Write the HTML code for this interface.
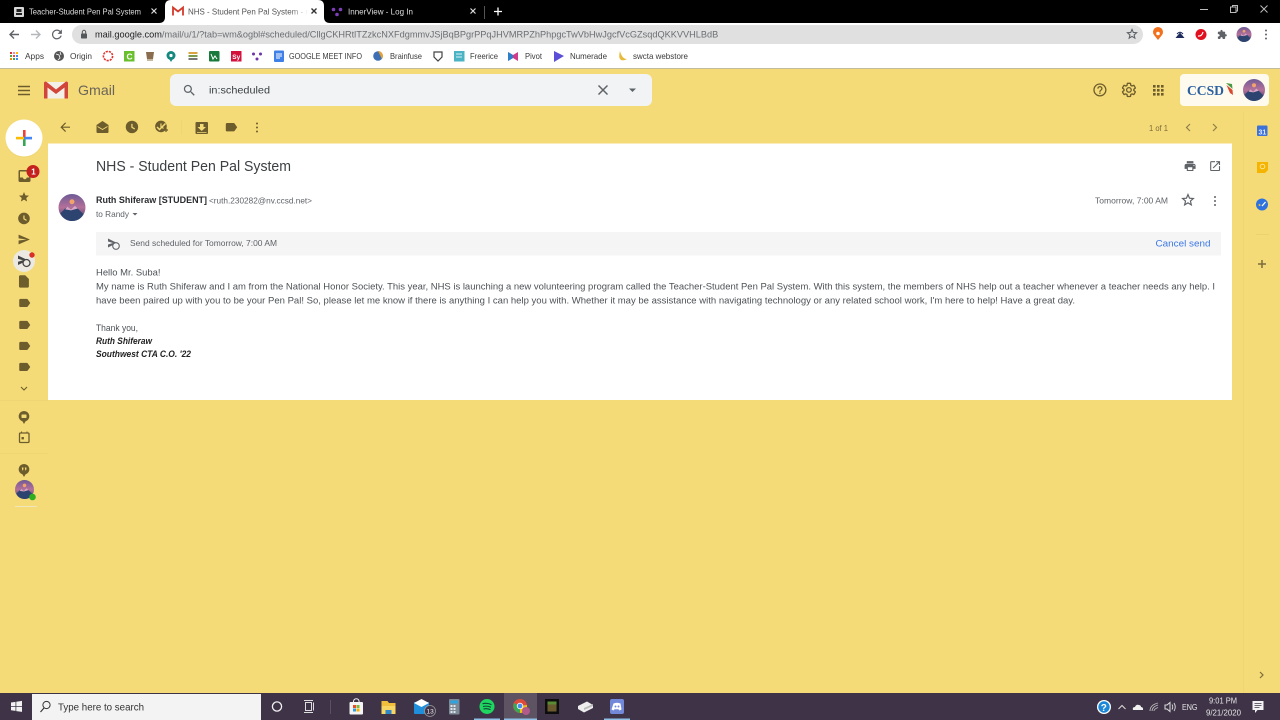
<!DOCTYPE html>
<html lang="en"><head><meta charset="utf-8"><title>NHS - Student Pen Pal System</title>
<style>
html,body{margin:0;padding:0;width:1280px;height:720px;overflow:hidden;background:#f5db77}
svg{display:block;position:absolute;left:0;top:0;filter:blur(.35px)}
text{font-family:"Liberation Sans",Arial,sans-serif;white-space:pre}
.i{fill:#6d5d2c}
.g{fill:#5f6368}
.s{fill:#5f6368;font-size:9.6px}
.b{fill:#4d5256;font-size:9.6px}
.bm{fill:#3a3a3a;font-size:8.2px}
</style></head><body>
<svg width="1280" height="720" viewBox="0 0 1280 720" xmlns="http://www.w3.org/2000/svg">
<defs>
<linearGradient id="sky" x1="0" y1="0" x2="0" y2="1"><stop offset="0" stop-color="#6d5a95"/><stop offset=".5" stop-color="#b5709a"/><stop offset="1" stop-color="#2c3f66"/></linearGradient>
<linearGradient id="fade" x1="0" x2="1"><stop offset="0" stop-color="#fff" stop-opacity="0"/><stop offset="1" stop-color="#fff"/></linearGradient>
<symbol id="av" viewBox="0 0 28 28">
<circle cx="14" cy="14" r="14" fill="url(#sky)"/><circle cx="14" cy="8" r="2.6" fill="#f2a36b"/>
<path d="M2 20l7-7 4 3 4-4 9 9q-4 7-12 7T2 20z" fill="#2d4470"/><path d="M9 13l4 3 4-4 3 3-7 2-6-1z" fill="#dba6c4"/>
</symbol>
<path id="lb" d="M17.63 5.84C17.27 5.33 16.67 5 16 5L5 5.01C3.9 5.01 3 5.9 3 7v10c0 1.1.9 1.99 2 1.99L16 19c.67 0 1.27-.33 1.63-.84L22 12l-4.37-6.16z"/>
<path id="clk" fill-rule="evenodd" d="M12 2a10 10 0 1 0 0 20 10 10 0 0 0 0-20zm-1 5h2v5l4 2.4-1 1.7-5-3z"/>
</defs>

<!-- page -->
<rect width="1280" height="720" fill="#f5db77"/>

<!-- title bar -->
<rect width="1280" height="23" fill="#000"/>
<path d="M159 23q6 0 6-6V6q0-6 6-6h147q6 0 6 6v11q0 6 6 6z" fill="#fff"/>
<rect x="14" y="7" width="10" height="10" rx="1" fill="#d8d8d8"/><rect x="16.5" y="9" width="5" height="3" fill="#222"/><rect x="16" y="13" width="6" height="2" fill="#222"/>
<text x="29" y="14.5" font-size="8.6" fill="#dedede" textLength="112" lengthAdjust="spacingAndGlyphs">Teacher-Student Pen Pal System</text>
<path d="M151.500 8.500l5 5m0-5l-5 5" stroke="#ddd" stroke-width="1.200"/>
<path d="M173 15.500v-8l5 4 5-4v8" fill="none" stroke="#d33b2c" stroke-width="1.800"/>
<text x="188" y="14.500" font-size="8.600" fill="#555" textLength="120" lengthAdjust="spacingAndGlyphs">NHS - Student Pen Pal System - r</text>
<rect x="290" y="4" width="18" height="16" fill="url(#fade)"/>
<path d="M311.500 8.500l5 5m0-5l-5 5" stroke="#333" stroke-width="1.400"/>
<g fill="#7d3fb8"><circle cx="333.500" cy="9.500" r="1.800"/><circle cx="340.500" cy="9.500" r="1.800"/><circle cx="337" cy="14.500" r="1.800"/></g>
<text x="348" y="14.500" font-size="8.600" fill="#dedede" textLength="65" lengthAdjust="spacingAndGlyphs">InnerView - Log In</text>
<path d="M470.500 8.500l5 5m0-5l-5 5" stroke="#ddd" stroke-width="1.200"/>
<rect x="484" y="6" width="1" height="13" fill="#555"/>
<path d="M498 7.500v8m-4-4h8" stroke="#fff" stroke-width="1.300"/>
<path d="M1200 9.500h8" stroke="#bbb"/><path d="M1230.500 7h5.500v5.500h-5.500zM1232.500 7v-1.500h5v5.500h-1.500" fill="none" stroke="#bbb"/><path d="M1260.500 5.500l7 7m0-7l-7 7" stroke="#bbb"/>

<!-- toolbar -->
<rect y="23" width="1280" height="45" fill="#fff"/>
<rect y="68" width="1280" height="1" fill="#c4bd9a"/>
<g fill="none" stroke="#5f6368" stroke-width="1.400"><path d="M19 34.500h-9m4-4l-4 4 4 4"/></g>
<g fill="none" stroke="#b5b8bb" stroke-width="1.400"><path d="M31 34.500h9m-4-4l4 4-4 4"/></g>
<path transform="translate(49.500 27) scale(.62)" fill="#5f6368" d="M17.65 6.35C16.2 4.9 14.21 4 12 4c-4.42 0-7.99 3.58-7.99 8s3.57 8 7.99 8c3.730 0 6.840-2.550 7.730-6h-2.080c-.82 2.330-3.040 4-5.650 4-3.310 0-6-2.690-6-6s2.690-6 6-6c1.660 0 3.140.69 4.220 1.780L13 11h7V4l-2.350 2.350z"/>
<rect x="72" y="25" width="1071" height="19" rx="9.500" fill="#e0e0e0"/>
<rect x="81" y="33.500" width="6" height="5" rx=".8" fill="#55585b"/><path d="M82.300 33.500v-1.500a1.700 1.700 0 0 1 3.400 0v1.500" fill="none" stroke="#55585b"/>
<text y="37.500" font-size="9.200" fill="#6b6e72"><tspan x="95" fill="#202124">mail.google.com</tspan><tspan>/mail/u/1/?tab=wm&amp;ogbl#scheduled/CllgCKHRtlTZzkcNXFdgmmvJSjBqBPgrPPqJHVMRPZhPhpgcTwVbHwJgcfVcGZsqdQKKVVHLBdB</tspan></text>
<path transform="translate(1126.500 28.500) scale(.46)" fill="none" stroke="#5f6368" stroke-width="2.400" d="M12 17.270L18.180 21l-1.640-7.030L22 9.240l-7.190-.61L12 2 9.190 8.630 2 9.240l5.460 4.730L5.820 21z"/>
<path d="M1158 40l-4-5a5 5 0 1 1 8 0z" fill="#f2711c"/><circle cx="1158" cy="33.500" r="1.800" fill="#fff"/>
<path d="M1175.500 38l4.500-5.500 4.500 5.500z" fill="#1d2a5c"/><path d="M1177 34q3-3.500 6 0" fill="none" stroke="#1d2a5c"/>
<circle cx="1201" cy="34.500" r="5.500" fill="#e0101e"/><path d="M1198 36q4 .5 5-4" fill="none" stroke="#fff" stroke-width="1.200"/>
<path transform="translate(1217 29.500) scale(.43)" fill="#5f6368" d="M20.500 11H19V7c0-1.100-.9-2-2-2h-4V3.500C13 2.120 11.880 1 10.500 1S8 2.120 8 3.500V5H4c-1.100 0-1.990.9-1.990 2v3.800H3.500c1.490 0 2.700 1.210 2.700 2.700s-1.210 2.700-2.700 2.700H2V20c0 1.100.9 2 2 2h3.800v-1.500c0-1.490 1.210-2.700 2.700-2.700 1.490 0 2.700 1.210 2.700 2.700V22H17c1.100 0 2-.9 2-2v-4h1.500c1.380 0 2.500-1.120 2.500-2.500S21.880 11 20.500 11z"/>
<use href="#av" x="1236.500" y="27" width="15" height="15"/>
<g fill="#5f6368"><circle cx="1266" cy="30.500" r="1"/><circle cx="1266" cy="34.500" r="1"/><circle cx="1266" cy="38.500" r="1"/></g>

<!-- bookmarks -->
<g fill="#d33"><rect x="10" y="52" width="2" height="2"/><rect x="13" y="52" width="2" height="2" fill="#e8a"/><rect x="16" y="52" width="2" height="2" fill="#fb0"/><rect x="10" y="55" width="2" height="2" fill="#4a4"/><rect x="13" y="55" width="2" height="2" fill="#e44"/><rect x="16" y="55" width="2" height="2" fill="#48e"/><rect x="10" y="58" width="2" height="2" fill="#e80"/><rect x="13" y="58" width="2" height="2" fill="#3a5"/><rect x="16" y="58" width="2" height="2" fill="#48e"/></g>
<text x="25" y="59" class="bm" textLength="19" lengthAdjust="spacingAndGlyphs">Apps</text>
<circle cx="59" cy="56" r="5" fill="#555"/><path d="M56 54l3 1 1 3-2 2M60 52l1 3" stroke="#fff" fill="none" stroke-width=".8"/>
<text x="70" y="59" class="bm" textLength="22" lengthAdjust="spacingAndGlyphs">Origin</text>
<circle cx="108" cy="56" r="4.600" fill="none" stroke="#e2332c" stroke-width="1.600" stroke-dasharray="2.200 1"/>
<rect x="124" y="51" width="10.500" height="10.500" fill="#6abf2e"/><text x="126.500" y="59.500" font-size="8.500" font-weight="bold" fill="#fff">C</text>
<path d="M146 52h8l-1 7h-6z" fill="#8a6d4f"/><rect x="147" y="59" width="6" height="2" fill="#c9b8a0"/>
<circle cx="171" cy="55.500" r="4.500" fill="#16897f"/><circle cx="171" cy="55.500" r="1.600" fill="#fff"/><path d="M169.500 59.500h3L171 62z" fill="#16897f"/>
<rect x="188.500" y="52" width="9" height="2" fill="#d9a441"/><rect x="188.500" y="55" width="9" height="2" fill="#7b9c4d"/><rect x="188.500" y="58" width="9" height="2" fill="#777"/>
<rect x="209" y="51" width="10.500" height="10.500" rx="1" fill="#1a7a3c"/><path d="M211 54l2 5 2-3 2 3" fill="none" stroke="#fff"/>
<rect x="231" y="51" width="10.500" height="10.500" fill="#d3123c"/><text x="232.300" y="59" font-size="6.500" font-weight="bold" fill="#fff">Sy</text>
<g fill="#6c34a8"><circle cx="253.500" cy="54" r="1.500"/><circle cx="260.500" cy="54" r="1.500"/><circle cx="257" cy="59" r="1.500"/></g>
<rect x="274" y="50.500" width="10" height="11.500" rx="1" fill="#3f7fe8"/><path d="M276 54h6m-6 2h6m-6 2h4" stroke="#fff"/>
<text x="289" y="59" class="bm" textLength="73" lengthAdjust="spacingAndGlyphs">GOOGLE MEET INFO</text>
<circle cx="378" cy="56" r="4.800" fill="#3d6fb5"/><path d="M378 51a5 5 0 0 1 4 8z" fill="#e5a23a"/>
<text x="390" y="59" class="bm" textLength="32" lengthAdjust="spacingAndGlyphs">Brainfuse</text>
<path d="M434 52h8v5l-4 4-4-4z" fill="none" stroke="#444" stroke-width="1.200"/>
<rect x="454" y="51" width="10.500" height="10.500" fill="#4bb3c4"/><path d="M456 54h6m-6 3h6" stroke="#d8f0f4"/>
<text x="470" y="59" class="bm" textLength="28" lengthAdjust="spacingAndGlyphs">Freerice</text>
<path d="M508 52l5 3 5-3v9l-5-3-5 3z" fill="#d23a8a"/><path d="M508 52l5 3v3l-5 3z" fill="#2c7fc9"/>
<text x="525" y="59" class="bm" textLength="17" lengthAdjust="spacingAndGlyphs">Pivot</text>
<path d="M554 51l10 5-10 6z" fill="#5a4fd6"/>
<text x="570" y="59" class="bm" textLength="37" lengthAdjust="spacingAndGlyphs">Numerade</text>
<path d="M620 51q-2 7 1 9 3 1 6-1-5 0-7-8z" fill="#e8b93a"/>
<text x="633" y="59" class="bm" textLength="55" lengthAdjust="spacingAndGlyphs">swcta webstore</text>

<!-- gmail header -->
<path d="M18 86.500h12M18 90.500h12M18 94.500h12" stroke="#6d5d2c" stroke-width="1.400"/>
<rect x="44.500" y="82" width="23.500" height="16.500" fill="#f2f0e8"/>
<path d="M44 98.500V83q0-1.500 2-1.500l10 8 10-8q2 0 2 1.500v15.500h-3.500V87.500L56 94l-8.500-6.500v11z" fill="#d2453a"/>
<text x="78" y="95" font-size="13.600" fill="#6a655a" textLength="37" lengthAdjust="spacingAndGlyphs">Gmail</text>
<rect x="170" y="74" width="482" height="32" rx="6" fill="#f1f3f4"/>
<path transform="translate(182 83) scale(.62)" fill="#5f6368" d="M15.500 14h-.79l-.28-.27C15.410 12.590 16 11.110 16 9.500 16 5.910 13.090 3 9.500 3S3 5.910 3 9.500 5.910 16 9.500 16c1.610 0 3.090-.59 4.230-1.570l.27.28v.79l5 4.990L20.490 19l-4.990-5zm-6 0C7.010 14 5 11.990 5 9.500S7.010 5 9.500 5 14 7.010 14 9.500 11.990 14 9.500 14z"/>
<text x="209" y="93.500" font-size="10" fill="#3c4043" textLength="61" lengthAdjust="spacingAndGlyphs">in:scheduled</text>
<path d="M598.500 85.500l9 9m0-9l-9 9" stroke="#5f6368" stroke-width="1.500"/>
<path d="M629 88.500h7l-3.500 3.500z" fill="#5f6368"/>
<path transform="translate(1092 82) scale(.66)" class="i" d="M11 18h2v-2h-2v2zm1-16C6.480 2 2 6.480 2 12s4.480 10 10 10 10-4.480 10-10S17.520 2 12 2zm0 18c-4.410 0-8-3.590-8-8s3.590-8 8-8 8 3.590 8 8-3.590 8-8 8zm0-14c-2.210 0-4 1.790-4 4h2c0-1.100.9-2 2-2s2 .9 2 2c0 2-3 1.750-3 5h2c0-2.250 3-2.500 3-5 0-2.210-1.790-4-4-4z"/>
<g transform="translate(1121 82) scale(.66)"><path fill="none" stroke="#6d5d2c" stroke-width="2" d="M19.430 12.980c.04-.32.07-.64.07-.98s-.03-.66-.07-.98l2.110-1.650c.19-.15.24-.42.12-.64l-2-3.460c-.12-.22-.39-.3-.61-.22l-2.490 1c-.52-.4-1.080-.73-1.690-.98l-.38-2.650C14.460 2.180 14.250 2 14 2h-4c-.25 0-.46.18-.49.42l-.38 2.650c-.61.25-1.170.59-1.690.98l-2.490-1c-.23-.09-.49 0-.61.22l-2 3.460c-.13.22-.07.49.12.64l2.110 1.650c-.04.32-.07.65-.07.98s.03.66.07.98l-2.110 1.650c-.19.15-.24.42-.12.64l2 3.460c.12.22.39.3.61.22l2.490-1c.52.4 1.080.73 1.690.98l.38 2.650c.03.24.24.42.49.42h4c.25 0 .46-.18.49-.42l.38-2.650c.61-.25 1.170-.59 1.690-.98l2.490 1c.23.09.49 0 .61-.22l2-3.460c.12-.22.07-.49-.12-.64l-2.110-1.650z"/><circle cx="12" cy="12" r="3.500" fill="none" stroke="#6d5d2c" stroke-width="2"/></g>
<g class="i"><rect x="1153" y="85" width="2.600" height="2.600"/><rect x="1157" y="85" width="2.600" height="2.600"/><rect x="1161" y="85" width="2.600" height="2.600"/><rect x="1153" y="89" width="2.600" height="2.600"/><rect x="1157" y="89" width="2.600" height="2.600"/><rect x="1161" y="89" width="2.600" height="2.600"/><rect x="1153" y="93" width="2.600" height="2.600"/><rect x="1157" y="93" width="2.600" height="2.600"/><rect x="1161" y="93" width="2.600" height="2.600"/></g>
<rect x="1180" y="74" width="89" height="32" rx="4" fill="#fefaee"/>
<text x="1187" y="95" style="font-family:'Liberation Serif',serif" font-size="13.500" font-weight="bold" fill="#2a5fa0" textLength="37" lengthAdjust="spacingAndGlyphs">CCSD</text>
<path d="M1226 83l6 1 .5 5z" fill="#4a9a45"/><path d="M1226.500 85l6 5 .5 5-3-2z" fill="#d9472f"/>
<use href="#av" x="1243" y="79" width="22" height="22"/>

<!-- message toolbar -->
<path transform="translate(58 120) scale(.6)" class="i" d="M20 11H7.830l5.590-5.590L12 4l-8 8 8 8 1.410-1.410L7.830 13H20v-2z"/>
<path class="i" fill-rule="evenodd" d="M96.500 125l6-4 6 4v7q0 1-1 1h-10q-1 0-1-1zm1 1v1l5 3 5-3v-1l-5 3z"/>
<use href="#clk" class="i" transform="translate(124.500 119.500) scale(.62)"/>
<use href="#clk" class="i" transform="translate(154 119.500) scale(.58)"/>
<path d="M157 127l2.500 2.500 6-6" stroke="#f5db77" stroke-width="1.500" fill="none"/><path d="M164 130h4m-2-2v4" stroke="#6d5d2c" stroke-width="1.200"/>
<rect x="181" y="120" width="1" height="15" fill="#efd573"/>
<path class="i" fill-rule="evenodd" d="M196.500 122h10.500q1 0 1 1v10q0 1-1 1h-10.500q-1 0-1-1v-10q0-1 1-1zm3.500 2v3h-2.500l4.200 4 4.300-4h-2.500v-3zm-3 8v.7h9.500V132z"/>
<use href="#lb" class="i" transform="translate(224 120) scale(.6)"/>
<g class="i"><circle cx="257" cy="123.500" r="1"/><circle cx="257" cy="127.500" r="1"/><circle cx="257" cy="131.500" r="1"/></g>
<text x="1149" y="131" font-size="8.400" fill="#7b6c3d" textLength="19" lengthAdjust="spacingAndGlyphs">1 of 1</text>
<path d="M1190 124l-3.500 3.500 3.500 3.500M1213 124l3.500 3.500-3.500 3.500" fill="none" stroke="#8d7e49" stroke-width="1.200"/>

<!-- right panel -->
<rect x="1243" y="112" width="1" height="581" fill="#efd573"/>
<rect x="1257" y="125.500" width="10.500" height="10.500" rx="1" fill="#3d73d9"/><text x="1258.500" y="134.500" font-size="7" font-weight="bold" fill="#dfe8fb">31</text>
<path d="M1257 162h11v8l-3 3h-8z" fill="#f4b400"/><circle cx="1262.500" cy="166.500" r="2.300" fill="none" stroke="#fbe39b"/>
<circle cx="1262" cy="204.500" r="6" fill="#2f73e0"/><path d="M1262 206l3.500-4" stroke="#fff" stroke-width="1.300"/><circle cx="1259.500" cy="205" r="1" fill="#f6c02c"/>
<rect x="1256" y="234" width="13" height="1" fill="#ecd26f"/>
<path d="M1262 260v8m-4-4h8" stroke="#7b6c3d" stroke-width="1.500"/>
<path d="M1260 672l3 3-3 3" fill="none" stroke="#7b6c3d" stroke-width="1.200"/>

<!-- sidebar -->
<circle cx="24" cy="139" r="18.500" fill="#efd470"/>
<circle cx="24" cy="138" r="18.500" fill="#fff"/>
<rect x="23" y="130" width="2.600" height="7" fill="#ea4335"/><rect x="23" y="139" width="2.600" height="7" fill="#34a853"/><rect x="16" y="136.800" width="8" height="2.600" fill="#fbbc04"/><rect x="24" y="136.800" width="8" height="2.600" fill="#4285f4"/>
<path class="i" fill-rule="evenodd" d="M20 170h9q1.500 0 1.500 1.500v9q0 1.500-1.500 1.500h-9q-1.500 0-1.500-1.500v-9q0-1.500 1.500-1.500zm0 1.500v6h2.800q.5 1.700 2 1.700t2-1.700h2.400v-6z"/>
<circle cx="33" cy="171.500" r="6.500" fill="#c5221f"/><text x="31.200" y="174.500" font-size="8" font-weight="bold" fill="#fff">1</text>
<path transform="translate(18 191) scale(.5)" class="i" d="M12 17.270L18.180 21l-1.640-7.030L22 9.240l-7.190-.61L12 2 9.190 8.630 2 9.240l5.460 4.730L5.820 21z"/>
<use href="#clk" class="i" transform="translate(17 211.500) scale(.58)"/>
<path transform="translate(17.500 233) scale(.54)" class="i" d="M2.010 21L23 12 2.010 3 2 10l15 2-15 2z"/>
<circle cx="24" cy="261" r="11" fill="#ebe9e2"/>
<path d="M18 255.500l10 4.800-10 4.700v-3.300l5-1.400-5-1.400z" fill="#444"/><circle cx="26.500" cy="263" r="3.500" fill="#ebe9e2" stroke="#444" stroke-width="1.300"/>
<circle cx="32" cy="255" r="2.700" fill="#d93025"/>
<path transform="translate(16.500 274) scale(.62)" class="i" d="M14 2H6c-1.100 0-1.990.9-1.990 2L4 20c0 1.100.89 2 1.990 2H18c1.100 0 2-.9 2-2V8l-6-6z"/>
<use href="#lb" class="i" transform="translate(17.500 296) scale(.58)"/>
<use href="#lb" class="i" transform="translate(17.500 318) scale(.58)"/>
<use href="#lb" class="i" transform="translate(17.500 339) scale(.58)"/>
<use href="#lb" class="i" transform="translate(17.500 360) scale(.58)"/>
<path d="M21 387l3 3 3-3" fill="none" stroke="#6d5d2c" stroke-width="1.100"/>
<rect y="400" width="48" height="1" fill="#efd573"/>
<path class="i" fill-rule="evenodd" d="M24 411a5.300 5.300 0 0 1 1.500 10.400l-1.500 2.600-1.500-2.600A5.300 5.300 0 0 1 24 411z"/><rect x="21.500" y="414.500" width="5" height="3.500" rx=".6" fill="#f5db77"/>
<rect x="19.500" y="433" width="9.500" height="9.500" rx="1" fill="none" stroke="#6d5d2c" stroke-width="1.300"/><path d="M21.500 431.500v2m5.500-2v2" stroke="#6d5d2c"/><rect x="21.500" y="437" width="2.400" height="2.400" class="i"/>
<rect y="453" width="48" height="1" fill="#efd573"/>
<path class="i" d="M24 464a5.300 5.300 0 0 1 1.500 10.400l-1.500 2.600-1.500-2.600A5.300 5.300 0 0 1 24 464z"/><path d="M21.800 467.500h1.600v2l-1 1.200M24.800 467.500h1.600v2l-1 1.200" fill="#f5db77"/>
<use href="#av" x="15" y="480" width="19" height="19"/>
<circle cx="32.500" cy="497" r="3.300" fill="#2fae1f"/>
<rect x="15" y="506" width="22" height="1" fill="#efe6bb"/>

<!-- message card -->
<rect x="48" y="143.500" width="1184" height="256.500" fill="#fff"/>
<text x="96" y="171" font-size="14.500" fill="#3c4043" textLength="195" lengthAdjust="spacingAndGlyphs">NHS - Student Pen Pal System</text>
<path transform="translate(1183.500 159.500) scale(.55)" class="g" d="M19 8H5c-1.660 0-3 1.340-3 3v6h4v4h12v-4h4v-6c0-1.660-1.340-3-3-3zm-3 11H8v-5h8v5zm3-7c-.55 0-1-.45-1-1s.45-1 1-1 1 .45 1 1-.45 1-1 1zm-1-9H6v4h12V3z"/>
<path transform="translate(1208.500 159.500) scale(.55)" class="g" d="M19 19H5V5h7V3H5c-1.110 0-2 .9-2 2v14c0 1.100.89 2 2 2h14c1.100 0 2-.9 2-2v-7h-2v7zM14 3v2h3.590l-9.830 9.830 1.410 1.410L19 6.410V10h2V3h-7z"/>
<use href="#av" x="58.500" y="194" width="27" height="27"/>
<text x="96" y="203" font-size="9.200" font-weight="bold" fill="#2b2d30" textLength="111" lengthAdjust="spacingAndGlyphs">Ruth Shiferaw [STUDENT]</text>
<text x="209" y="203.500" font-size="8" fill="#5f6368" textLength="103" lengthAdjust="spacingAndGlyphs">&lt;ruth.230282@nv.ccsd.net&gt;</text>
<text x="96" y="217" font-size="8.500" fill="#5f6368" textLength="33" lengthAdjust="spacingAndGlyphs">to Randy</text>
<path d="M132.500 213h5l-2.500 2.500z" fill="#5f6368"/>
<text x="1095" y="203.500" font-size="8.600" fill="#5f6368" textLength="73" lengthAdjust="spacingAndGlyphs">Tomorrow, 7:00 AM</text>
<path transform="translate(1181.500 193.500) scale(.54)" fill="none" stroke="#5f6368" stroke-width="2.200" d="M12 17.270L18.180 21l-1.640-7.030L22 9.240l-7.190-.61L12 2 9.190 8.630 2 9.240l5.460 4.730L5.820 21z"/>
<g class="g"><circle cx="1215" cy="197" r="1"/><circle cx="1215" cy="201" r="1"/><circle cx="1215" cy="205" r="1"/></g>
<rect x="96" y="232" width="1125" height="23.500" fill="#f5f5f5"/>
<path d="M108 238.500l9 4.500-9 4.500v-3l5-1.500-5-1.500z" fill="#5f6368"/><circle cx="116" cy="246" r="3.300" fill="#f5f5f5" stroke="#5f6368" stroke-width="1.100"/>
<text x="130" y="246" font-size="8.400" fill="#5f6368" textLength="147" lengthAdjust="spacingAndGlyphs">Send scheduled for Tomorrow, 7:00 AM</text>
<text x="1155.500" y="246.500" font-size="9.600" fill="#3b78e7" textLength="55" lengthAdjust="spacingAndGlyphs">Cancel send</text>
<text x="96" y="275.500" class="b" textLength="64.500" lengthAdjust="spacingAndGlyphs">Hello Mr. Suba!</text>
<text x="96" y="289.500" class="b" textLength="1119" lengthAdjust="spacingAndGlyphs">My name is Ruth Shiferaw and I am from the National Honor Society. This year, NHS is launching a new volunteering program called the Teacher-Student Pen Pal System. With this system, the members of NHS help out a teacher whenever a teacher needs any help. I</text>
<text x="96" y="303.500" class="b" textLength="979" lengthAdjust="spacingAndGlyphs">have been paired up with you to be your Pen Pal! So, please let me know if there is anything I can help you with. Whether it may be assistance with navigating technology or any related school work, I'm here to help! Have a great day.</text>
<text x="96" y="331" class="b" textLength="42" lengthAdjust="spacingAndGlyphs">Thank you,</text>
<text x="96" y="344" font-size="9" font-weight="bold" font-style="italic" fill="#222" textLength="56" lengthAdjust="spacingAndGlyphs">Ruth Shiferaw</text>
<text x="96" y="357" font-size="9" font-weight="bold" font-style="italic" fill="#222" textLength="95" lengthAdjust="spacingAndGlyphs">Southwest CTA C.O. '22</text>

<!-- taskbar -->
<rect y="693" width="1280" height="27" fill="#3f3447"/>
<path d="M11 702.500l4.500-.6v4.100H11zM16.300 701.700l5.700-.8v5.100h-5.700zM11 706.800h4.500v4.100l-4.500-.6zM16.300 706.800H22v5.100l-5.700-.8z" fill="#f2f2f2"/>
<rect x="32" y="694" width="229" height="26" fill="#f3f3f3"/>
<circle cx="46.500" cy="705" r="3.600" fill="none" stroke="#333" stroke-width="1"/><path d="M44 708l-3.500 4" stroke="#333" stroke-width="1.100"/>
<text x="58" y="710.500" font-size="10" fill="#333" textLength="86" lengthAdjust="spacingAndGlyphs">Type here to search</text>
<circle cx="277" cy="706.500" r="4.600" fill="none" stroke="#f0f0f0" stroke-width="1.300"/>
<path d="M305.500 702.500h6v8h-6zM304 700.500h9M304 712.500h9M313.500 702.500v8" fill="none" stroke="#ddd" stroke-width="1"/>
<rect x="330" y="700" width="1" height="14" fill="#5b5162"/>
<rect x="349.500" y="702" width="13.500" height="12.500" rx="1" fill="#f4f4f4"/><path d="M353.500 702v-.5a2.800 2.800 0 0 1 5.600 0v.5" fill="none" stroke="#f4f4f4"/>
<rect x="353" y="705" width="3" height="3" fill="#e74c2b"/><rect x="356.500" y="705" width="3" height="3" fill="#7eb93a"/><rect x="353" y="708.500" width="3" height="3" fill="#2f9be0"/><rect x="356.500" y="708.500" width="3" height="3" fill="#f4b400"/>
<path d="M381.500 701h6l1.500 2h6.500v11h-14z" fill="#f2bf3c"/><rect x="381.500" y="706" width="14" height="8" fill="#f7d663"/><rect x="385.500" y="710" width="6" height="4" fill="#2f87c9"/>
<rect x="414" y="702" width="15" height="12" rx="1" fill="#1f8fdc"/><path d="M414 703l7.500-4 7.500 4-7.500 4z" fill="#fff"/>
<circle cx="430" cy="711" r="5.500" fill="#3f3447" stroke="#999" stroke-width=".8"/><text x="426.500" y="713.500" font-size="6.500" fill="#eee">13</text>
<rect x="449" y="699" width="10.500" height="15.500" rx="1" fill="#7c8a97"/><rect x="450.500" y="700.500" width="7.500" height="3" fill="#2da3e0"/><g fill="#dfe5ea"><rect x="450.500" y="705" width="2" height="2"/><rect x="453.500" y="705" width="2" height="2"/><rect x="450.500" y="708" width="2" height="2"/><rect x="453.500" y="708" width="2" height="2"/><rect x="450.500" y="711" width="2" height="2"/><rect x="453.500" y="711" width="2" height="2"/></g>
<circle cx="487" cy="706.500" r="7.500" fill="#1ed760"/><path d="M482.500 703.800q4.500-1.200 9 .8M483 706.500q4-1 8 .7M483.500 709q3.500-.8 7 .6" fill="none" stroke="#143" stroke-width="1.100"/>
<rect x="504" y="693" width="33" height="27" fill="#5d5363"/>
<circle cx="520" cy="706" r="7" fill="#de4b3a"/><path d="M520 706l7-1a7 7 0 0 1-7 8z" fill="#f4c20d"/><path d="M520 706v7a7 7 0 0 1-6-10z" fill="#3aa757"/><circle cx="520" cy="706" r="2.800" fill="#4a8bf0" stroke="#fff" stroke-width=".8"/>
<circle cx="526" cy="711" r="4" fill="#b25a8a"/>
<rect x="545" y="699" width="14" height="15" fill="#0d0d0d"/><rect x="547.500" y="701.500" width="9" height="10" fill="#6b5a2e"/><rect x="547.500" y="701.500" width="9" height="3" fill="#5b8a35"/>
<path d="M578 706l9-4.500 6 3.500v3l-9 4.500-6-3.500z" fill="#eee"/><path d="M584 708l9-4v2l-9 4z" fill="#bbb"/>
<rect x="610" y="699" width="14" height="15" rx="2" fill="#7289da"/><path d="M613.500 703.500q3.500-1.500 7 0l1 6-2 1-1-1.200h-4l-1 1.200-2-1z" fill="#fff"/><circle cx="615.500" cy="706.500" r="1" fill="#7289da"/><circle cx="618.500" cy="706.500" r="1" fill="#7289da"/>
<rect x="474" y="718.500" width="26" height="1.500" fill="#8fc1e8"/><rect x="504" y="718.500" width="33" height="1.500" fill="#8fc1e8"/><rect x="604" y="718.500" width="26" height="1.500" fill="#8fc1e8"/>
<circle cx="1104" cy="707" r="7" fill="#fff"/><circle cx="1104" cy="707" r="5.700" fill="#1b87d6"/><text x="1100.700" y="711" font-size="10" font-weight="bold" fill="#fff">?</text>
<path d="M1118.500 709l3.500-3.500 3.500 3.500" fill="none" stroke="#ddd" stroke-width="1"/>
<path d="M1133 710q-1-3 2-3 1-3 4-2 2 .3 2 2 2.500 0 2 3z" fill="#f0f0f0"/>
<path d="M1150 711q0-6 8-8M1152 711q0-4 6-6M1154 711q0-2 4-3.500" fill="none" stroke="#bbb" stroke-width=".9"/>
<path d="M1165 705h2l3-2.500v9l-3-2.500h-2z" fill="none" stroke="#ddd"/><path d="M1172 704.500q1.500 2.500 0 5M1174 703q2.500 4 0 8" fill="none" stroke="#ddd" stroke-width=".9"/>
<text x="1182" y="710" font-size="8.200" fill="#e6e6e6" textLength="15.500" lengthAdjust="spacingAndGlyphs">ENG</text>
<text x="1209" y="703.500" font-size="8.200" fill="#e6e6e6" textLength="28" lengthAdjust="spacingAndGlyphs">9:01 PM</text>
<text x="1206" y="715.500" font-size="8.200" fill="#e6e6e6" textLength="35" lengthAdjust="spacingAndGlyphs">9/21/2020</text>
<path d="M1252.500 701h11v9h-6l-2.500 3v-3h-2.500z" fill="#f2f2f2"/><path d="M1254.500 703.500h7M1254.500 705.500h7M1254.500 707.500h5" stroke="#3f3447" stroke-width=".7"/>
</svg>
</body></html>
